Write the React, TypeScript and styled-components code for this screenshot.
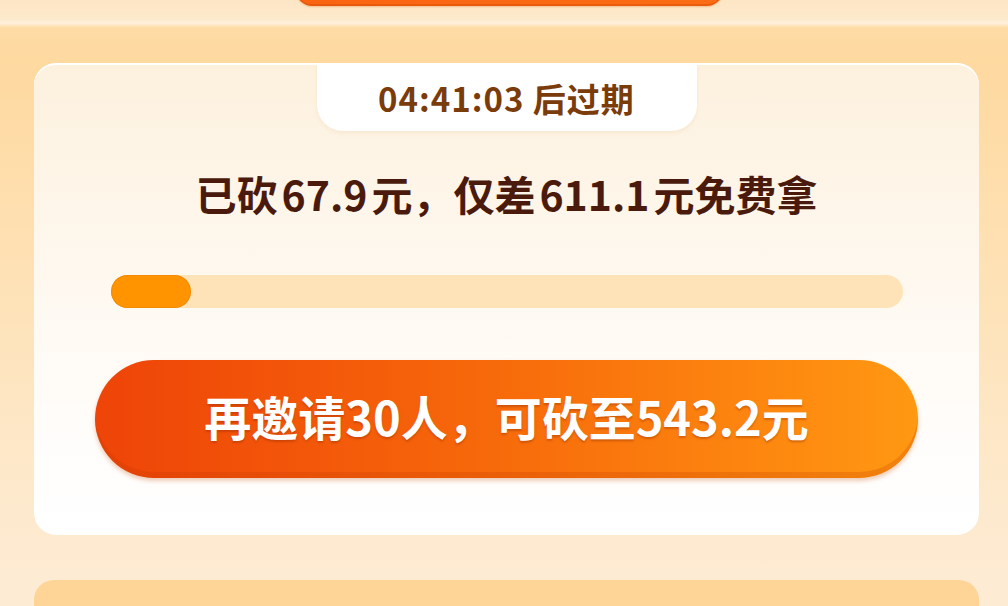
import React from "react";
import styled, { createGlobalStyle } from "styled-components";

const GlobalStyle = createGlobalStyle`
  html, body {
    margin: 0;
    padding: 0;
    width: 1008px;
    height: 606px;
    overflow: hidden;
    background: #fdebd3;
    font-family: "Noto Sans CJK SC", "Noto Sans", Roboto, sans-serif;
  }
  * { box-sizing: border-box; }
`;

const Page = styled.div`
  width: 1008px;
  height: 606px;
  display: flex;
  flex-direction: column;
  overflow: hidden;
`;

const Header = styled.div`
  height: 63px;
  flex: none;
  display: flex;
  justify-content: center;
  padding-left: 10px;
  background: linear-gradient(
    to bottom,
    #fde6c5 0px,
    #fde9cc 19px,
    #fff0dd 23px,
    #fedba5 28px,
    #fed9a0 100%
  );
`;

const TopButtonStub = styled.div`
  width: 427px;
  height: 46px;
  margin-top: -40px;
  border-radius: 0 0 16px 16px;
  background: linear-gradient(to right, #fa6411, #fb6c14);
  box-shadow: inset 0 -2px 0 rgba(200, 70, 0, 0.35), 0 1px 2px rgba(220, 110, 30, 0.35);
`;

const Main = styled.div`
  flex: 1;
  display: flex;
  flex-direction: column;
  padding: 0 29px 0 34px;
  background: linear-gradient(to bottom, #fed9a0 0px, #fee1b4 200px, #fde8c9 400px, #fdebd3 520px);
`;

const Card = styled.div`
  height: 472px;
  flex: none;
  border-radius: 22px;
  background: linear-gradient(to bottom, #fdf1de 0%, #fef8ef 45%, #fffdfb 80%, #ffffff 100%);
  box-shadow: inset 0 2px 0 rgba(255, 255, 255, 0.95);
  display: flex;
  flex-direction: column;
  align-items: center;
`;

const TimerTab = styled.div`
  width: 380px;
  height: 68px;
  border-radius: 0 0 26px 26px;
  background: #ffffff;
  box-shadow: 0 2px 4px rgba(230, 180, 120, 0.18);
  display: flex;
  align-items: center;
  justify-content: center;
  color: #7b3c0c;
  font-size: 33px;
  font-weight: 700;
  letter-spacing: 1px;
  line-height: 1;
  padding-top: 2px;
`;

const Title = styled.div`
  margin-top: 38px;
  height: 48px;
  line-height: 48px;
  font-size: 41px;
  font-weight: 700;
  color: #4a1b0c;
  white-space: nowrap;
`;

const Num = styled.span`
  margin: 0 4px;
`;

const Track = styled.div`
  margin-top: 58px;
  width: 792px;
  height: 33px;
  border-radius: 17px;
  background: #fee3b8;
  display: flex;
  align-self: center;
  margin-left: 1px;
`;

const Fill = styled.div`
  height: 100%;
  border-radius: 17px;
  background: #ff9400;
  box-shadow: inset 0 0 0 1px rgba(230, 130, 0, 0.5);
`;

const ActionButton = styled.button`
  margin-top: 52px;
  width: 823px;
  height: 118px;
  border: none;
  border-radius: 59px;
  background: linear-gradient(to right, #ee4408 0%, #f5620a 40%, #fd860f 80%, #ff9812 100%);
  box-shadow: inset 0 -6px 0 rgba(190, 55, 0, 0.22), 0 3px 4px rgba(200, 90, 20, 0.3);
  color: #ffffff;
  font-family: "Noto Sans CJK SC", "Noto Sans", Roboto, sans-serif;
  font-size: 47px;
  font-weight: 700;
  text-shadow: 0 2px 2px rgba(140, 40, 0, 0.35);
  display: flex;
  align-items: center;
  justify-content: center;
  padding: 0 0 8px 0;
  white-space: nowrap;
  cursor: pointer;
`;

const Gap = styled.div`
  height: 45px;
  flex: none;
`;

const NextCard = styled.div`
  height: 40px;
  flex: none;
  border-radius: 20px 20px 0 0;
  background: #fed597;
`;

export default function App() {
  const cut = 67.9;
  const total = 679;
  const progress = 80; // px width of fill in reference
  return (
    <>
      <GlobalStyle />
      <Page>
        <Header>
          <TopButtonStub />
        </Header>
        <Main>
          <Card>
            <TimerTab>04:41:03 后过期</TimerTab>
            <Title>
              已砍<Num>{cut}</Num>元，仅差<Num>{(total - cut).toFixed(1)}</Num>元免费拿
            </Title>
            <Track>
              <Fill style={{ width: `${progress}px` }} />
            </Track>
            <ActionButton>再邀请30人，可砍至543.2元</ActionButton>
          </Card>
          <Gap />
          <NextCard />
        </Main>
      </Page>
    </>
  );
}
